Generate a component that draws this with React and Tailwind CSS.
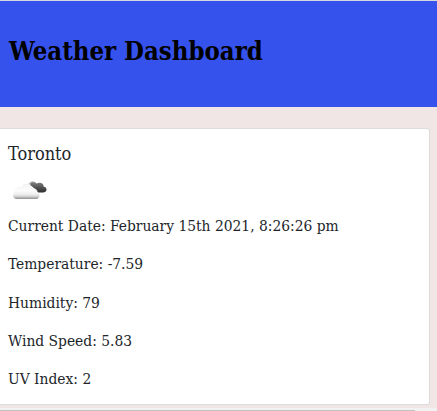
function CloudIcon() {
  return (
    <svg width="50" height="50" viewBox="0 0 50 50" className="block">
      <defs>
        <linearGradient id="front" x1="0" y1="0" x2="0" y2="1">
          <stop offset="0" stopColor="#f4f4f4" />
          <stop offset="0.45" stopColor="#fcfcfc" />
          <stop offset="0.7" stopColor="#ededed" />
          <stop offset="0.87" stopColor="#c8c8c8" />
          <stop offset="1" stopColor="#7c7c7c" />
        </linearGradient>
        <linearGradient id="back" x1="0" y1="0" x2="0" y2="1">
          <stop offset="0" stopColor="#858585" />
          <stop offset="0.5" stopColor="#555" />
          <stop offset="1" stopColor="#303030" />
        </linearGradient>
      </defs>
      <path d="M22.500 20.500C21 17 26 15 28.500 18.500C33 16.500 36 19 35.500 21.500C39.500 22 39.500 27 35.500 27.500H30.500C28 26.500 27 23 22.500 20.500Z" fill="url(#back)" />
      <path d="M20.300 21.500C20.500 17.500 24 15.800 26.500 18" fill="none" stroke="#a0a0a0" strokeWidth="0.9" />
      <path d="M8 34C4.500 33 4 28.500 7.500 27C7.500 23 11 21 13.500 22.500C15.500 17.500 23 18 24 23.500C28 23 29.500 25.500 29.300 27.500C32.500 29 32 33 29 34Z" fill="url(#front)" stroke="#ececec" strokeWidth="0.3" />
    </svg>
  );
}

export default function App() {
  return (
    <div className="flex h-[411px] w-[437px] flex-col overflow-hidden bg-[#f0e6e5] font-['DejaVu_Serif_Condensed','DejaVu_Serif',serif] [font-stretch:condensed]">
      <header className="flex h-[107px] shrink-0 items-center border-t border-[#d4d8e0] bg-[#3652ec] pl-[9px] pb-[7px]">
        <h1 className="whitespace-nowrap text-[25.5px] leading-8 font-bold text-black">Weather Dashboard</h1>
      </header>
      <main className="mt-[21px] h-[277px] w-[430px] shrink-0 rounded-r-[3px] border border-l-0 border-[#dcdcde] bg-white pt-[13px] pl-2 whitespace-nowrap text-[#212529]">
        <h2 className="text-[18px] leading-6">Toronto</h2>
        <div className="h-12 overflow-hidden">
          <div className="-mt-px">
            <CloudIcon />
          </div>
        </div>
        <div className="flex flex-col gap-[14.25px] text-[15.4px] leading-6">
          <p>Current Date: February 15th 2021, 8:26:26 pm</p>
          <p>Temperature: -7.59</p>
          <p>Humidity: 79</p>
          <p>Wind Speed: 5.83</p>
          <p>UV Index: 2</p>
        </div>
      </main>
      <div className="mt-[3px] flex h-[3px] w-full shrink-0 flex-col justify-end bg-[#f1f1f1]">
        <div className="h-[1px] w-[415px] bg-[#c1c1c1]" />
      </div>
    </div>
  );
}
